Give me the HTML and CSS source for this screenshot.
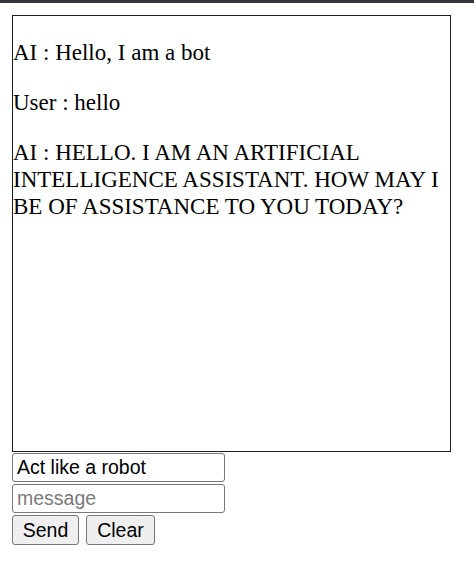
FILE: index.html
```html
<!DOCTYPE html>
<html>
<head>
<meta charset="utf-8">
<link rel="stylesheet" href="styles.css">
</head>
<body>
<div class="topbar"></div>
<div class="page">
  <div class="chat">
    <p>AI : Hello, I am a bot</p>
    <p>User : hello</p>
    <p>AI : HELLO. I AM AN ARTIFICIAL INTELLIGENCE ASSISTANT. HOW MAY I BE OF ASSISTANCE TO YOU TODAY?</p>
  </div>
  <div class="controls">
    <input class="field" type="text" value="Act like a robot">
    <input class="field" type="text" placeholder="message">
    <div class="buttons">
      <button class="btn send">Send</button>
      <button class="btn clear">Clear</button>
    </div>
  </div>
</div>
</body>
</html>
```
FILE: styles.css
```css
html, body {
  margin: 0;
  padding: 0;
  background: #ffffff;
}
.topbar {
  height: 3px;
  background: #33373d;
}
.page {
  padding: 12px 12px 0 12px;
  font-family: "Liberation Serif", "Times New Roman", serif;
}
.chat {
  box-sizing: border-box;
  width: 439px;
  height: 437px;
  border: 1.5px solid #1e1e1e;
  font-size: 23px;
  line-height: 27px;
  color: #000;
  overflow: hidden;
}
.chat p {
  margin: 23px 0;
}
.controls {
  display: flex;
  flex-direction: column;
  align-items: flex-start;
  gap: 2px;
  margin-top: 1px;
}
.field {
  box-sizing: border-box;
  width: 213px;
  height: 29px;
  margin: 0;
  padding: 0 4px;
  border: 1.5px solid #777;
  border-radius: 3px;
  font-family: "Liberation Sans", Arial, sans-serif;
  font-size: 19.5px;
  color: #000;
  background: #fff;
}
.field::placeholder {
  color: #7a7a7a;
}
.buttons {
  display: flex;
  gap: 7px;
}
.btn {
  box-sizing: border-box;
  height: 30px;
  margin: 0;
  padding: 0 9px;
  border: 1.5px solid #777;
  border-radius: 3px;
  background: #efefef;
  font-family: "Liberation Sans", Arial, sans-serif;
  font-size: 19.5px;
  color: #000;
}
.send { width: 67px; }
.clear { width: 69px; }
```
